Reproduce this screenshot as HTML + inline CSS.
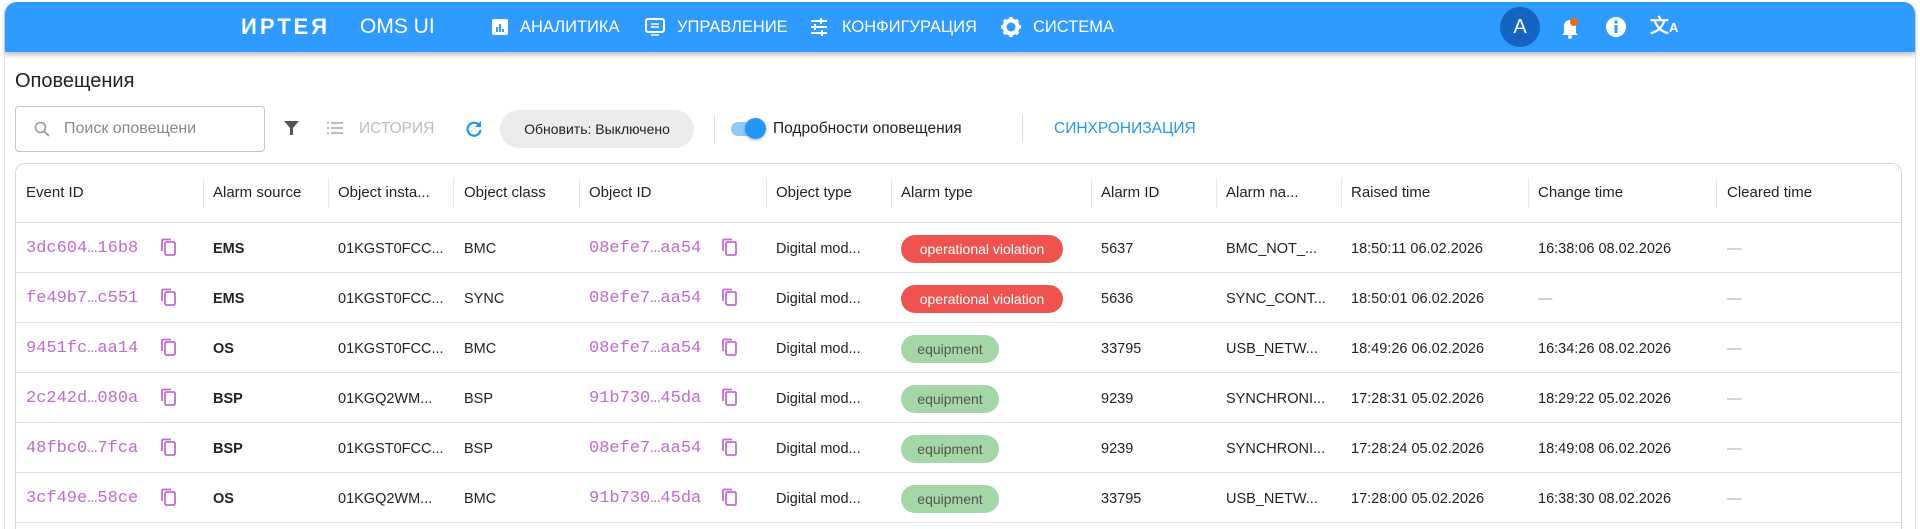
<!DOCTYPE html>
<html><head><meta charset="utf-8"><style>
*{box-sizing:border-box;margin:0;padding:0}
html{width:1920px;height:529px;overflow:hidden}
body{width:1920px;height:529px;overflow:hidden;background:#fff;font-family:"Liberation Sans",sans-serif;color:#222;position:relative}
.frame{position:absolute;left:4px;top:2px;width:1912px;height:527px;border:1px solid #e4e4e4;border-bottom:none;border-radius:12px 12px 0 0}
.bar{position:absolute;left:5px;top:2px;width:1910px;height:50px;background:#2f9aff;border-radius:12px 12px 0 0;box-shadow:0 3px 5px rgba(0,0,0,.25);color:#fff}
.bar .t{position:absolute;top:0;line-height:50px;white-space:nowrap}
.a{position:absolute;white-space:nowrap}
.card{position:absolute;left:15px;top:163px;width:1887px;height:366px;border:1px solid #d6d6d6;border-bottom:none;border-radius:10px 10px 0 0}
.hl{position:absolute;left:16px;width:1885px;height:1px;background:#e0e0e0}
.h{position:absolute;top:184px;font-size:15px;color:#222;white-space:nowrap}
.sep{position:absolute;top:178px;width:1px;height:30px;background:#e8e8e8}
.c{position:absolute;font-size:14.5px;white-space:nowrap;line-height:20px}
.m{font-family:"Liberation Mono",monospace;color:#c06bd0;font-size:17px}
.b{position:absolute;height:28px;border-radius:14px;font-size:14px;line-height:28px;text-align:center}
.red{background:#ef5350;color:#fff;width:162px}
.grn{background:#a5d6a7;color:#555;width:98px}
</style></head><body>
<div class="frame"></div>
<div class="bar">
 <div class="t" style="left:236px;font-size:22px;font-weight:bold;letter-spacing:3px">ИРТЕЯ</div>
 <div class="t" style="left:355px;font-size:21px">OMS UI</div>
 <svg class="a" style="left:486px;top:16px" width="18" height="18" viewBox="0 0 18 18"><rect x="1" y="1" width="16" height="16" rx="2" fill="#fff"/><rect x="5" y="9" width="2" height="5" fill="#2f9aff"/><rect x="8" y="6" width="2" height="8" fill="#2f9aff"/><rect x="11" y="11" width="2" height="3" fill="#2f9aff"/></svg>
 <div class="t" style="left:515px;font-size:16.5px">АНАЛИТИКА</div>
 <svg class="a" style="left:640px;top:15px" width="20" height="20" viewBox="0 0 20 20"><rect x="1" y="2" width="18" height="13" rx="2" fill="none" stroke="#fff" stroke-width="2"/><path d="M6 18h8M6 7h8M6 10h8" stroke="#fff" stroke-width="1.6"/></svg>
 <div class="t" style="left:672px;font-size:16.5px">УПРАВЛЕНИЕ</div>
 <svg class="a" style="left:805px;top:16px" width="18" height="18" viewBox="0 0 18 18"><path d="M1 3h16M1 9h16M1 15h16" stroke="#fff" stroke-width="2"/><path d="M11 0v6M5 6v6M12 12v6" stroke="#fff" stroke-width="2"/></svg>
 <div class="t" style="left:837px;font-size:16.5px">КОНФИГУРАЦИЯ</div>
 <svg class="a" style="left:996px;top:15px" width="20" height="20" viewBox="0 0 20 20"><circle cx="10" cy="10" r="6.5" fill="none" stroke="#fff" stroke-width="4"/><path d="M10 0v5M10 15v5M0 10h5M15 10h5M3 3l3.5 3.5M13.5 13.5L17 17M17 3l-3.5 3.5M6.5 13.5L3 17" stroke="#fff" stroke-width="3.5"/></svg>
 <div class="t" style="left:1028px;font-size:16.5px">СИСТЕМА</div>
 <div class="a" style="left:1495px;top:5px;width:40px;height:40px;border-radius:50%;background:#1565c0;text-align:center;line-height:40px;font-size:20px">A</div>
 <svg class="a" style="left:1555px;top:14px" width="22" height="24" viewBox="0 0 22 24"><path d="M4 17V10a6 6 0 0 1 12 0v7l2 2H2z" fill="#fff"/><circle cx="10" cy="21" r="2" fill="#fff"/><circle cx="14" cy="6" r="4" fill="#ef6c00"/></svg>
 <svg class="a" style="left:1600px;top:14px" width="22" height="22" viewBox="0 0 22 22"><circle cx="11" cy="11" r="10" fill="#fff"/><rect x="9.5" y="9" width="3" height="8" fill="#2f9aff"/><circle cx="11" cy="6" r="1.7" fill="#2f9aff"/></svg>
 <div class="t" style="left:1645px;font-size:19px;font-weight:bold">文<span style="font-size:13px">A</span></div>
</div>
<div class="a" style="left:15px;top:70px;font-size:20px;color:#222">Оповещения</div>
<div class="a" style="left:15px;top:106px;width:250px;height:46px;border:1px solid #c4c4c4;border-radius:4px"></div>
<svg class="a" style="left:34px;top:121px" width="16" height="16" viewBox="0 0 16 16"><circle cx="6.5" cy="6.5" r="5" fill="none" stroke="#999" stroke-width="1.6"/><path d="M10 10l5 5" stroke="#999" stroke-width="1.8"/></svg>
<div class="a" style="left:64px;top:120px;font-size:16px;color:#888;width:195px;overflow:hidden">Поиск оповещени</div>
<svg class="a" style="left:284px;top:120px" width="15" height="16" viewBox="0 0 15 16"><path d="M0 1h15L9 8v7H6V8z" fill="#555"/></svg>
<svg class="a" style="left:327px;top:122px" width="16" height="12" viewBox="0 0 16 12"><path d="M0 1h2M0 6h2M0 11h2M4 1h12M4 6h12M4 11h12" stroke="#bbb" stroke-width="2"/></svg>
<div class="a" style="left:359px;top:120px;font-size:15.5px;color:#bdbdbd">ИСТОРИЯ</div>
<svg class="a" style="left:465px;top:120px" width="18" height="18" viewBox="0 0 18 18"><path d="M14 5A6.5 6.5 0 1 0 15.5 10" fill="none" stroke="#2196f3" stroke-width="2.2"/><path d="M16 1v6h-6z" fill="#2196f3"/></svg>
<div class="a" style="left:500px;top:110px;width:194px;height:38px;border-radius:19px;background:#ebebeb;font-size:14px;line-height:38px;text-align:center;color:#222">Обновить: Выключено</div>
<div class="a" style="left:714px;top:115px;width:1px;height:28px;background:#ddd"></div>
<div class="a" style="left:731px;top:122px;width:34px;height:14px;border-radius:7px;background:#90caf9"></div>
<div class="a" style="left:745px;top:118px;width:21px;height:21px;border-radius:50%;background:#2196f3;box-shadow:0 1px 3px rgba(0,0,0,.3)"></div>
<div class="a" style="left:773px;top:120px;font-size:15.5px">Подробности оповещения</div>
<div class="a" style="left:1022px;top:115px;width:1px;height:28px;background:#ddd"></div>
<div class="a" style="left:1054px;top:120px;font-size:15.5px;color:#2196f3">СИНХРОНИЗАЦИЯ</div>

<div class="card"></div>
<div class="hl" style="top:222px"></div><div class="hl" style="top:272px"></div><div class="hl" style="top:322px"></div><div class="hl" style="top:372px"></div><div class="hl" style="top:422px"></div><div class="hl" style="top:472px"></div><div class="hl" style="top:522px"></div>
<div class="sep" style="left:203px"></div><div class="sep" style="left:328px"></div><div class="sep" style="left:453px"></div><div class="sep" style="left:579px"></div><div class="sep" style="left:766px"></div><div class="sep" style="left:891px"></div><div class="sep" style="left:1091px"></div><div class="sep" style="left:1216px"></div><div class="sep" style="left:1341px"></div><div class="sep" style="left:1528px"></div><div class="sep" style="left:1716px"></div>
<div class="h" style="left:26px">Event ID</div><div class="h" style="left:213px">Alarm source</div><div class="h" style="left:338px">Object insta...</div><div class="h" style="left:464px">Object class</div><div class="h" style="left:589px">Object ID</div><div class="h" style="left:776px">Object type</div><div class="h" style="left:901px">Alarm type</div><div class="h" style="left:1101px">Alarm ID</div><div class="h" style="left:1226px">Alarm na...</div><div class="h" style="left:1351px">Raised time</div><div class="h" style="left:1538px">Change time</div><div class="h" style="left:1727px">Cleared time</div>
<svg width="0" height="0" style="position:absolute"><defs><g id="cp"><rect x="5" y="4" width="10" height="13" rx="1.5" fill="none" stroke="#c06bd0" stroke-width="1.8"/><path d="M2 13V2.5A1 1 0 0 1 3 1.5h8" fill="none" stroke="#c06bd0" stroke-width="1.8"/></g></defs></svg>
<div id="rows"></div>
<script>
var d=[["3dc604…16b8","EMS","01KGST0FCC...","BMC","08efe7…aa54",1,"5637","BMC_NOT_...","18:50:11 06.02.2026","16:38:06 08.02.2026"],
["fe49b7…c551","EMS","01KGST0FCC...","SYNC","08efe7…aa54",1,"5636","SYNC_CONT...","18:50:01 06.02.2026","—"],
["9451fc…aa14","OS","01KGST0FCC...","BMC","08efe7…aa54",0,"33795","USB_NETW...","18:49:26 06.02.2026","16:34:26 08.02.2026"],
["2c242d…080a","BSP","01KGQ2WM...","BSP","91b730…45da",0,"9239","SYNCHRONI...","17:28:31 05.02.2026","18:29:22 05.02.2026"],
["48fbc0…7fca","BSP","01KGST0FCC...","BSP","08efe7…aa54",0,"9239","SYNCHRONI...","17:28:24 05.02.2026","18:49:08 06.02.2026"],
["3cf49e…58ce","OS","01KGQ2WM...","BMC","91b730…45da",0,"33795","USB_NETW...","17:28:00 05.02.2026","16:38:30 08.02.2026"]];
var h="";d.forEach(function(r,i){var y=222+i*50,t=y+17;
h+='<div class="c m" style="left:26px;top:'+t+'px">'+r[0]+'</div><svg class="a" style="left:160px;top:'+(y+16)+'px" width="18" height="20"><use href="#cp"/></svg>';
h+='<div class="c" style="left:213px;top:'+t+'px;font-weight:bold">'+r[1]+'</div>';
h+='<div class="c" style="left:338px;top:'+t+'px">'+r[2]+'</div><div class="c" style="left:464px;top:'+t+'px">'+r[3]+'</div>';
h+='<div class="c m" style="left:589px;top:'+t+'px">'+r[4]+'</div><svg class="a" style="left:721px;top:'+(y+16)+'px" width="18" height="20"><use href="#cp"/></svg>';
h+='<div class="c" style="left:776px;top:'+t+'px">Digital mod...</div>';
h+=r[5]?'<div class="b red" style="left:901px;top:'+(y+13)+'px">operational violation</div>':'<div class="b grn" style="left:901px;top:'+(y+13)+'px">equipment</div>';
h+='<div class="c" style="left:1101px;top:'+t+'px">'+r[6]+'</div><div class="c" style="left:1226px;top:'+t+'px">'+r[7]+'</div><div class="c" style="left:1351px;top:'+t+'px">'+r[8]+'</div>';
h+='<div class="c" style="left:1538px;top:'+t+'px;color:'+(r[9]=="—"?"#aaa":"#222")+'">'+r[9]+'</div><div class="c" style="left:1727px;top:'+t+'px;color:#aaa">—</div>';});
document.getElementById("rows").innerHTML=h;
</script>
</body></html>
